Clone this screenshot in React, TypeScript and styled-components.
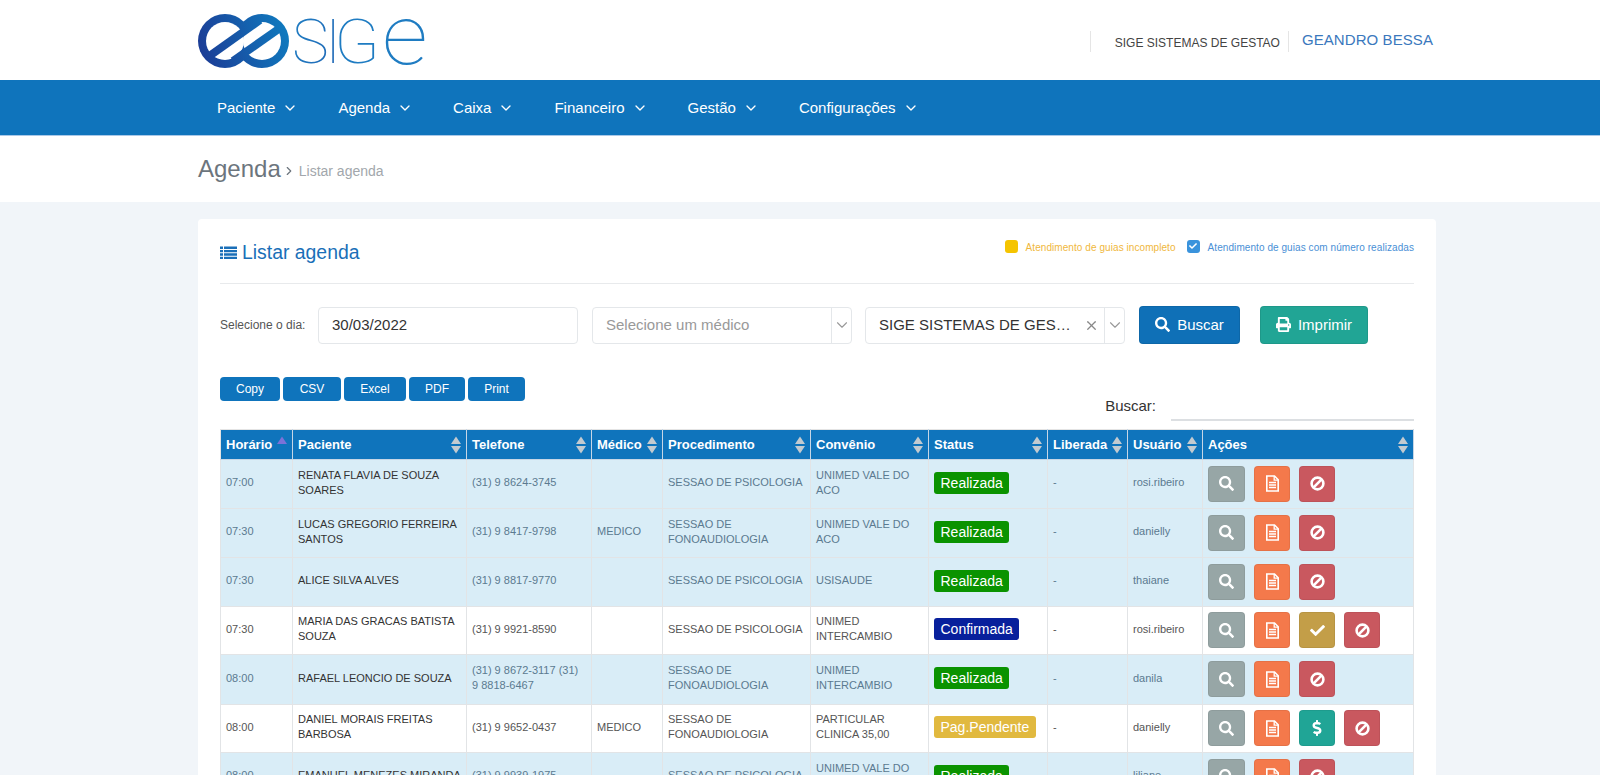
import React from "react";
import styled, { createGlobalStyle } from "styled-components";
import { FaSearch, FaCheck, FaDollarSign, FaPrint } from "react-icons/fa";
import { FiChevronDown, FiChevronRight, FiX } from "react-icons/fi";

const Global = createGlobalStyle`
  html, body { margin: 0; padding: 0; height: 775px; overflow: hidden; background: #f1f5f9; }
  body { font-family: "Liberation Sans", Arial, sans-serif; color: #333; }
`;

const Shell = styled.div`
  width: 1600px;
  height: 775px;
  overflow: hidden;
`;
const Header = styled.header`
  height: 80px;
  background: #fff;
  display: flex;
  align-items: flex-start;
  justify-content: space-between;
  padding-left: 190px;
  padding-right: 167px;
`;
const LogoSvg = styled.svg`
  display: block;
  margin-top: 8px;
  overflow: visible;
`;
const HeaderRight = styled.div`
  display: flex;
  align-items: flex-start;
  margin-top: 31px;
`;
const Company = styled.div`
  height: 19px;
  line-height: 20px;
  border-left: 1px solid #e5e5e5;
  border-right: 1px solid #e5e5e5;
  padding: 2px 8px 0 24px;
  font-size: 12px;
  color: #444;
`;
const UserName = styled.div`
  padding-left: 13px;
  margin-top: -1px;
  font-size: 15px;
  letter-spacing: 0.08px;
  line-height: 19px;
  color: #3a78bd;
`;
const Nav = styled.nav`
  height: 55px;
  background: #0f74bc;
  border-bottom: 1px solid #a9c8e8;
  display: flex;
  align-items: center;
  gap: 40px;
  padding-left: 217px;
`;
const NavItem = styled.div`
  display: flex;
  align-items: center;
  gap: 7px;
  color: #fff;
  font-size: 15px;
  svg { font-size: 16px; }
`;
const Crumbs = styled.div`
  height: 66px;
  background: #fff;
  display: flex;
  align-items: center;
  padding-left: 198px;
`;
const CrumbTitle = styled.span`
  font-size: 24px;
  color: #6c757d;
`;
const CrumbSep = styled.span`
  display: flex;
  font-size: 14px;
  color: #6c757d;
  margin: 4px 3px 0 1px;
`;
const CrumbSub = styled.span`
  font-size: 14px;
  margin-top: 4px;
  color: #a2a7ac;
`;
const Card = styled.main`
  width: 1194px;
  margin: 17px 0 0 198px;
  padding: 0 22px;
  background: #fff;
  border-radius: 4px;
`;
const TitleRow = styled.div`
  height: 64px;
  border-bottom: 1px solid #e8eaec;
  display: flex;
  justify-content: space-between;
  align-items: center;
`;
const CardTitle = styled.h1`
  margin: 3px 0 0;
  font-size: 19.4px;
  font-weight: 400;
  color: #1a6fb8;
  display: flex;
  align-items: center;
  gap: 5px;
`;
const Legend = styled.div`
  display: flex;
  align-items: center;
  font-size: 10px;
  letter-spacing: 0.07px;
  margin-top: -8px;
`;
const Swatch = styled.span<{ $c: string }>`
  width: 13px;
  height: 13px;
  border-radius: 3px;
  background: ${(p) => p.$c};
  color: #fff;
  display: inline-flex;
  align-items: center;
  justify-content: center;
  font-size: 8px;
  margin: 0 8px 2px 0;
`;
const LegendText = styled.span<{ $c: string; $mr?: number }>`
  color: ${(p) => p.$c};
  margin-right: ${(p) => p.$mr ?? 0}px;
`;
const Filters = styled.div`
  display: flex;
  align-items: center;
  padding-top: 22px;
  height: 38px;
`;
const FilterLabel = styled.label`
  width: 98px;
  font-size: 12px;
  color: #555;
`;
const Field = styled.div<{ $w: number; $mr: number }>`
  width: ${(p) => p.$w}px;
  height: 37px;
  box-sizing: border-box;
  border: 1px solid #e4e7ea;
  border-radius: 4px;
  margin-right: ${(p) => p.$mr}px;
  display: flex;
  align-items: center;
  font-size: 15px;
  color: #333;
  background: #fff;
`;
const FieldText = styled.span<{ $muted?: boolean }>`
  flex: 1;
  padding: 0 0 2px 13px;
  color: ${(p) => (p.$muted ? "#999" : "#333")};
  white-space: nowrap;
`;
const Clear = styled.span`
  color: #888;
  display: flex;
  font-size: 15px;
  margin-right: 5px;
`;
const Caret = styled.span`
  width: 19px;
  height: 100%;
  border-left: 1px solid #e4e7ea;
  display: flex;
  align-items: center;
  justify-content: center;
  color: #999;
  font-size: 18px;
  svg { stroke-width: 1.5; }
`;
const ActionBtn = styled.button<{ $bg: string; $w: number; $mr?: number }>`
  width: ${(p) => p.$w}px;
  height: 38px;
  border: 1px solid rgba(0, 0, 0, 0.08);
  border-radius: 4px;
  background: ${(p) => p.$bg};
  color: #fff;
  font: 400 15px "Liberation Sans", Arial, sans-serif;
  display: flex;
  align-items: center;
  justify-content: center;
  gap: 7px;
  margin-right: ${(p) => p.$mr ?? 0}px;
  padding: 0 0 2px;
  svg { font-size: 15px; }
`;
const ToolRow = styled.div`
  display: flex;
  justify-content: space-between;
  margin-top: 33px;
  height: 44px;
`;
const ExportGroup = styled.div`
  display: flex;
  gap: 3px;
  height: 24px;
`;
const ExportBtn = styled.button<{ $w: number }>`
  width: ${(p) => p.$w}px;
  height: 24px;
  border: 0;
  border-radius: 4px;
  background: #0f74bc;
  color: #fff;
  font: 400 12px "Liberation Sans", Arial, sans-serif;
  padding: 0;
`;
const SearchBox = styled.div`
  display: flex;
  align-items: flex-start;
  font-size: 15px;
  color: #333;
  padding-top: 20px;
`;
const SearchLine = styled.div`
  width: 243px;
  height: 23px;
  margin-left: 15px;
  margin-top: -1px;
  border-bottom: 2px solid #dcdfe2;
`;
const Table = styled.table`
  margin-top: 8px;
  width: 1193px;
  table-layout: fixed;
  border-collapse: collapse;
  border: 1px solid #e4e4e4;
`;
const Th = styled.th<{ $w: number }>`
  position: relative;
  width: ${(p) => p.$w}px;
  height: 30px;
  padding: 0 5px;
  box-sizing: border-box;
  background: #0f74bc;
  color: #fff;
  font-size: 13px;
  font-weight: 700;
  text-align: left;
  border-right: 1px solid #c6d6e6;
  border-bottom: 1px solid #c6d6e6;
`;
const SortMark = styled.svg`
  position: absolute;
  right: 5px;
  top: 6px;
`;
const Tr = styled.tr<{ $striped: boolean; $h: number }>`
  height: ${(p) => p.$h}px;
  background: ${(p) => (p.$striped ? "#d9edf7" : "#fff")};
  color: ${(p) => (p.$striped ? "#5b7a90" : "#555")};
`;
const Td = styled.td<{ $dark?: boolean }>`
  padding: 0 ${(p) => (p.$dark ? 3 : 6)}px 3px 5px;
  font-size: 11px;
  line-height: 15px;
  box-sizing: border-box;
  border: 1px solid #e2e4e6;
  color: ${(p) => (p.$dark ? "#333" : "inherit")};
`;
const Badge = styled.span<{ $c: string }>`
  display: inline-block;
  height: 22px;
  line-height: 22px;
  padding: 0 6.5px;
  border-radius: 3px;
  background: ${(p) => p.$c};
  color: #fff;
  font-size: 14px;
  white-space: nowrap;
  vertical-align: middle;
`;
const Actions = styled.div`
  display: flex;
  gap: 9px;
  margin-top: 2px;
`;
const IconBtn = styled.button<{ $bg: string; $w: number }>`
  width: ${(p) => p.$w}px;
  height: 36px;
  border: 1px solid rgba(0, 0, 0, 0.06);
  border-radius: 4px;
  background: ${(p) => p.$bg};
  color: #fff;
  display: flex;
  align-items: center;
  justify-content: center;
  padding: 0;
  font-size: 15px;
`;

const columns: [string, number][] = [
  ["Horário", 72], ["Paciente", 174], ["Telefone", 125], ["Médico", 71], ["Procedimento", 148],
  ["Convênio", 118], ["Status", 119], ["Liberada", 80], ["Usuário", 75], ["Ações", 211],
];

type St = "r" | "c" | "p";
const statusInfo: Record<St, [string, string]> = {
  r: ["Realizada", "#0a9300"],
  c: ["Confirmada", "#08209c"],
  p: ["Pag.Pendente", "#e1b93f"],
};
type Row = { t: string; n: string; f: string; m: string; pr: string; co: string; s: St; u: string; x?: "check" | "money"; h: number; st: boolean };
const rows: Row[] = [
  { t: "07:00", n: "RENATA FLAVIA DE SOUZA SOARES", f: "(31) 9 8624-3745", m: "", pr: "SESSAO DE PSICOLOGIA", co: "UNIMED VALE DO ACO", s: "r", u: "rosi.ribeiro", h: 49, st: true },
  { t: "07:30", n: "LUCAS GREGORIO FERREIRA SANTOS", f: "(31) 9 8417-9798", m: "MEDICO", pr: "SESSAO DE FONOAUDIOLOGIA", co: "UNIMED VALE DO ACO", s: "r", u: "danielly", h: 49, st: true },
  { t: "07:30", n: "ALICE SILVA ALVES", f: "(31) 9 8817-9770", m: "", pr: "SESSAO DE PSICOLOGIA", co: "USISAUDE", s: "r", u: "thaiane", h: 49, st: true },
  { t: "07:30", n: "MARIA DAS GRACAS BATISTA SOUZA", f: "(31) 9 9921-8590", m: "", pr: "SESSAO DE PSICOLOGIA", co: "UNIMED INTERCAMBIO", s: "c", u: "rosi.ribeiro", x: "check", h: 48, st: false },
  { t: "08:00", n: "RAFAEL LEONCIO DE SOUZA", f: "(31) 9 8672-3117 (31) 9 8818-6467", m: "", pr: "SESSAO DE FONOAUDIOLOGIA", co: "UNIMED INTERCAMBIO", s: "r", u: "danila", h: 50, st: true },
  { t: "08:00", n: "DANIEL MORAIS FREITAS BARBOSA", f: "(31) 9 9652-0437", m: "MEDICO", pr: "SESSAO DE FONOAUDIOLOGIA", co: "PARTICULAR CLINICA 35,00", s: "p", u: "danielly", x: "money", h: 48, st: false },
  { t: "08:00", n: "EMANUEL MENEZES MIRANDA", f: "(31) 9 9939-1975", m: "", pr: "SESSAO DE PSICOLOGIA", co: "UNIMED VALE DO ACO", s: "r", u: "liliane", h: 49, st: true },
];

function Sort({ active }: { active?: boolean }) {
  return (
    <SortMark width="10" height="18" viewBox="0 0 10 18">
      <path d="M5 0.5 L10 8 H0 Z" fill={active ? "#7b72d8" : "#c2cad0"} />
      {!active && <path d="M5 17.5 L0 10 H10 Z" fill="#c2cad0" />}
    </SortMark>
  );
}

function ListIcon() {
  return (
    <svg width="17" height="14" viewBox="0 0 17 14" fill="currentColor">
      <path d="M0 0.5h3v2.4H0z M4 0.5h13v2.4H4z M0 3.9h3v2.4H0z M4 3.9h13v2.4H4z M0 7.3h3v2.4H0z M4 7.3h13v2.4H4z M0 10.7h3v2.4H0z M4 10.7h13v2.4H4z" />
    </svg>
  );
}

function BanIcon() {
  return (
    <svg width="15" height="15" viewBox="0 0 15 15" fill="none" stroke="#fff" strokeWidth="2.6">
      <circle cx="7.5" cy="7.5" r="5.9" />
      <path d="M3.4 11.6 L11.6 3.4" />
    </svg>
  );
}

function FileIcon() {
  return (
    <svg width="15" height="17" viewBox="0 0 15 17" fill="none" stroke="#fff">
      <path d="M1.8 1 H9.5 L13.2 4.8 V16 H1.8 Z" strokeWidth="1.6" />
      <path d="M9.2 1 V5.2 H13.2" strokeWidth="1.3" />
      <path d="M4 7.5 H11 M4 10 H11 M4 12.5 H11" strokeWidth="1.4" />
    </svg>
  );
}

function Logo() {
  return (
    <LogoSvg width="240" height="66" viewBox="0 0 240 66">
      <defs>
        <linearGradient id="ring" gradientUnits="userSpaceOnUse" x1="8" y1="50" x2="100" y2="20">
          <stop offset="0" stopColor="#1c3a94" />
          <stop offset="1" stopColor="#0f7cc0" />
        </linearGradient>
        <linearGradient id="word" gradientUnits="userSpaceOnUse" x1="106" y1="10" x2="236" y2="55">
          <stop offset="0" stopColor="#1f7cc2" />
          <stop offset="1" stopColor="#2a4ea6" />
        </linearGradient>
      </defs>
      <circle cx="35" cy="33" r="27" fill="url(#ring)" />
      <circle cx="72" cy="33" r="27" fill="url(#ring)" />
      <circle cx="35" cy="33" r="19" fill="#fff" />
      <circle cx="72" cy="33" r="19" fill="#fff" />
      <path d="M18 49 L70 12" stroke="url(#ring)" strokeWidth="8" fill="none" />
      <path d="M43 53 L90 20" stroke="url(#ring)" strokeWidth="8" fill="none" />
      <g fill="url(#word)" fontFamily="Roboto, Lato, sans-serif" fontWeight={100}>
        <text x="102" y="55" fontSize="62">S</text>
        <text x="135" y="55" fontSize="62">I</text>
        <text transform="translate(144 55) scale(1.08 1)" fontSize="62">G</text>
        <text transform="translate(192 56) scale(1.08 1)" fontSize="84">e</text>
      </g>
    </LogoSvg>
  );
}

export default function App() {
  return (
    <Shell>
      <Global />
      <Header>
        <Logo />
        <HeaderRight>
          <Company>SIGE SISTEMAS DE GESTAO</Company>
          <UserName>GEANDRO BESSA</UserName>
        </HeaderRight>
      </Header>
      <Nav>
        {["Paciente", "Agenda", "Caixa", "Financeiro", "Gestão", "Configurações"].map((n) => (
          <NavItem key={n}>{n}<FiChevronDown /></NavItem>
        ))}
      </Nav>
      <Crumbs>
        <CrumbTitle>Agenda</CrumbTitle>
        <CrumbSep><FiChevronRight /></CrumbSep>
        <CrumbSub>Listar agenda</CrumbSub>
      </Crumbs>
      <Card>
        <TitleRow>
          <CardTitle><ListIcon />Listar agenda</CardTitle>
          <Legend>
            <Swatch $c="#f5c400" />
            <LegendText $c="#f0b73c" $mr={11}>Atendimento de guias incompleto</LegendText>
            <Swatch $c="#3a93dc"><FaCheck /></Swatch>
            <LegendText $c="#4a90d6">Atendimento de guias com número realizadas</LegendText>
          </Legend>
        </TitleRow>
        <Filters>
          <FilterLabel>Selecione o dia:</FilterLabel>
          <Field $w={260} $mr={14}><FieldText>30/03/2022</FieldText></Field>
          <Field $w={260} $mr={13}><FieldText $muted>Selecione um médico</FieldText><Caret><FiChevronDown /></Caret></Field>
          <Field $w={260} $mr={14}><FieldText>SIGE SISTEMAS DE GES…</FieldText><Clear><FiX /></Clear><Caret><FiChevronDown /></Caret></Field>
          <ActionBtn $bg="#0f70b7" $w={101} $mr={20}><FaSearch />Buscar</ActionBtn>
          <ActionBtn $bg="#21a595" $w={108}><FaPrint />Imprimir</ActionBtn>
        </Filters>
        <ToolRow>
          <ExportGroup>
            <ExportBtn $w={60}>Copy</ExportBtn>
            <ExportBtn $w={58}>CSV</ExportBtn>
            <ExportBtn $w={62}>Excel</ExportBtn>
            <ExportBtn $w={56}>PDF</ExportBtn>
            <ExportBtn $w={57}>Print</ExportBtn>
          </ExportGroup>
          <SearchBox>Buscar:<SearchLine /></SearchBox>
        </ToolRow>
        <Table>
          <thead>
            <tr>
              {columns.map(([c, w], i) => (
                <Th key={c} $w={w}>{c}<Sort active={i === 0} /></Th>
              ))}
            </tr>
          </thead>
          <tbody>
            {rows.map((r, i) => (
              <Tr key={i} $striped={r.st} $h={r.h}>
                <Td>{r.t}</Td>
                <Td $dark>{r.n}</Td>
                <Td>{r.f}</Td>
                <Td>{r.m}</Td>
                <Td>{r.pr}</Td>
                <Td>{r.co}</Td>
                <Td><Badge $c={statusInfo[r.s][1]}>{statusInfo[r.s][0]}</Badge></Td>
                <Td>-</Td>
                <Td>{r.u}</Td>
                <Td>
                  <Actions>
                    <IconBtn $bg="#97a6a6" $w={37}><FaSearch /></IconBtn>
                    <IconBtn $bg="#f4794b" $w={36}><FileIcon /></IconBtn>
                    {r.x === "check" && <IconBtn $bg="#c39e48" $w={36}><FaCheck /></IconBtn>}
                    {r.x === "money" && <IconBtn $bg="#20a596" $w={36}><FaDollarSign size={16} /></IconBtn>}
                    <IconBtn $bg="#c9585f" $w={36}><BanIcon /></IconBtn>
                  </Actions>
                </Td>
              </Tr>
            ))}
          </tbody>
        </Table>
      </Card>
    </Shell>
  );
}
